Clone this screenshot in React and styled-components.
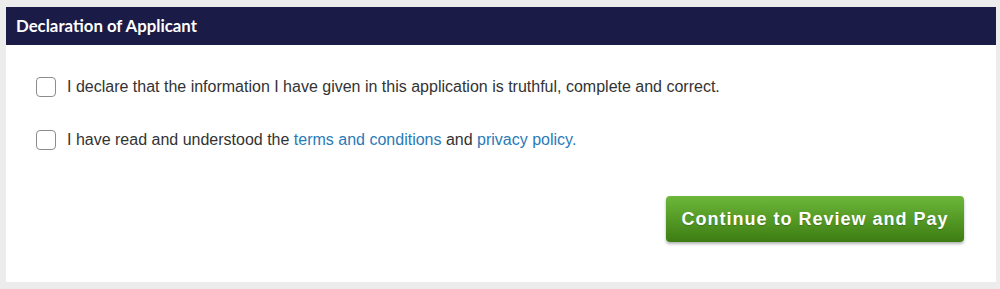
import styled, { createGlobalStyle } from 'styled-components'
import { useState } from 'react'

const GlobalStyle = createGlobalStyle`
  html, body {
    margin: 0;
    padding: 0;
    background: #ececec;
  }
  body {
    font-family: 'Liberation Sans', Arial, sans-serif;
  }
`

function App() {
  const [declared, setDeclared] = useState(false)
  const [agreed, setAgreed] = useState(false)

  return (
    <Page>
      <GlobalStyle />
      <Panel>
        <Header>Declaration of Applicant</Header>
        <Body>
          <CheckRow>
            <Box type='checkbox' checked={declared} onChange={(e) => setDeclared(e.target.checked)} />
            <Label>
              I declare that the information I have given in this application is truthful, complete and correct.
            </Label>
          </CheckRow>
          <CheckRow>
            <Box type='checkbox' checked={agreed} onChange={(e) => setAgreed(e.target.checked)} />
            <Label>
              I have read and understood the <Link href='#'>terms and conditions</Link> and{' '}
              <Link href='#'>privacy policy.</Link>
            </Label>
          </CheckRow>
          <Actions>
            <PayButton type='button'>Continue to Review and Pay</PayButton>
          </Actions>
        </Body>
      </Panel>
    </Page>
  )
}

export default App

const Page = styled.div`
  padding: 7px 4px 7px 6px;
  height: 289px;
  box-sizing: border-box;
`

const Panel = styled.div`
  background: #fff;
  height: 275px;
  display: flex;
  flex-direction: column;
`

const Header = styled.div`
  background: #1b1b47;
  color: #fff;
  font-family: Lato, 'Noto Sans', sans-serif;
  font-weight: 700;
  font-size: 16.8px;
  height: 38px;
  line-height: 38px;
  padding: 0 10px;
`

const Body = styled.div`
  padding: 32px 32px 0 30px;
  display: flex;
  flex-direction: column;
`

const CheckRow = styled.label`
  display: flex;
  align-items: center;
  gap: 11px;
  height: 20px;
  margin-bottom: 33px;
  cursor: pointer;
`

const Box = styled.input`
  appearance: none;
  margin: 0;
  width: 20px;
  height: 20px;
  border: 1px solid #8c8c8c;
  border-radius: 4px;
  background: #fff;
  box-sizing: border-box;
  cursor: pointer;
  &:checked {
    background: #1b1b47;
    border-color: #1b1b47;
  }
`

const Label = styled.span`
  font-size: 16px;
  color: #333;
`

const Link = styled.a`
  color: #2a7ab8;
  text-decoration: none;
`

const Actions = styled.div`
  display: flex;
  justify-content: flex-end;
  margin-top: 13px;
`

const PayButton = styled.button`
  width: 298px;
  height: 46px;
  border: 0;
  border-radius: 4px;
  background: linear-gradient(#6cb83a, #3d7c12);
  box-shadow: 0 2px 3px rgba(0, 0, 0, 0.3);
  color: #fff;
  font-family: 'Liberation Sans', Arial, sans-serif;
  font-weight: 700;
  font-size: 18px;
  letter-spacing: 1px;
  text-shadow: 0 1px 1px rgba(0, 0, 0, 0.2);
  cursor: pointer;
`
